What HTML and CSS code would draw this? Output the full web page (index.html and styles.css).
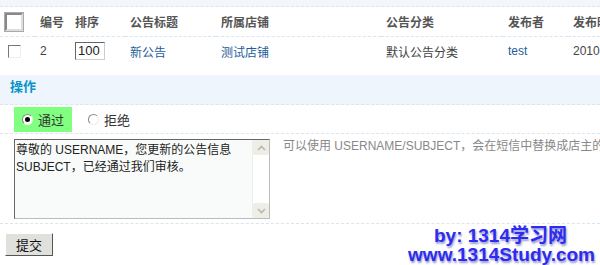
FILE: index.html
```html
<!DOCTYPE html>
<html lang="zh-CN">
<head>
    <meta charset="UTF-8">
    <title>公告审核</title>
    <link rel="stylesheet" href="styles.css">
</head>
<body>
    <div class="top-strip"></div>
    <table class="list">
        <colgroup>
            <col style="width: 35px">
            <col style="width: 35px">
            <col style="width: 55px">
            <col style="width: 91px">
            <col style="width: 165px">
            <col style="width: 122px">
            <col style="width: 65px">
            <col style="width: 32px">
        </colgroup>
        <tr class="head">
            <th><span class="chk big"></span></th>
            <th>编号</th>
            <th>排序</th>
            <th>公告标题</th>
            <th>所属店铺</th>
            <th>公告分类</th>
            <th>发布者</th>
            <th>发布时间</th>
        </tr>
        <tr class="row">
            <td><span class="chk"></span></td>
            <td>2</td>
            <td><span class="sort">100</span></td>
            <td><a href="#">新公告</a></td>
            <td><a href="#">测试店铺</a></td>
            <td>默认公告分类</td>
            <td><a href="#">test</a></td>
            <td>2010-10-10</td>
        </tr>
    </table>

    <div class="op-title">操作</div>
    <div class="op-radios">
        <label class="opt on"><span class="radio checked"></span>通过</label>
        <label class="opt"><span class="radio"></span>拒绝</label>
    </div>
    <div class="op-msg">
        <div class="msg-box">
            <textarea class="msg">尊敬的 USERNAME，您更新的公告信息
SUBJECT，已经通过我们审核。</textarea>
            <div class="bar">
                <span class="bar-btn">
                    <svg width="9" height="6" viewBox="0 0 9 6"><path d="M1 5 L4.5 1.5 L8 5" fill="none" stroke="#b8b8b0" stroke-width="1.6"/></svg>
                </span>
                <span class="bar-btn">
                    <svg width="9" height="6" viewBox="0 0 9 6"><path d="M1 1 L4.5 4.5 L8 1" fill="none" stroke="#b8b8b0" stroke-width="1.6"/></svg>
                </span>
            </div>
        </div>
        <div class="hint">可以使用 USERNAME/SUBJECT，会在短信中替换成店主的用户名和公告标题</div>
    </div>
    <div class="op-submit">
        <button class="submit">提交</button>
    </div>

    <div class="mark">
        <div class="mark-by">by: 1314学习网</div>
        <div class="mark-url">www.1314Study.com</div>
    </div>
</body>
</html>
```

FILE: styles.css
```css
body {
    margin: 0;
    font-family: "Liberation Sans", "Noto Sans CJK SC", sans-serif;
    font-size: 12px;
    color: #444;
    background: #fff;
    width: 600px;
    height: 265px;
    overflow: hidden;
    position: relative;
}

.top-strip {
    height: 6px;
    background: #f3f7fb;
    border-bottom: 1px dashed #d9e6f2;
}

.list {
    border-collapse: collapse;
    table-layout: fixed;
    width: 600px;
}

.list th,
.list td {
    padding: 0 5px;
    text-align: left;
    white-space: nowrap;
    overflow: hidden;
}

.list th:last-child,
.list td:last-child {
    padding-right: 0;
}

.list th {
    height: 29px;
    font-weight: bold;
    color: #555;
    border-bottom: 1px dashed #d9e6f2;
}

.list td {
    height: 28px;
}

.list a {
    color: #1d5c9a;
    text-decoration: none;
}

.chk {
    display: inline-block;
    width: 11px;
    height: 11px;
    border: 1px solid;
    border-color: #777 #eee #eee #777;
    background: #fff;
    vertical-align: middle;
    margin-left: 3px;
}

.chk.big {
    width: 14px;
    height: 14px;
    margin-left: 0;
    border: 2px solid;
    border-color: #888 #ddd #ddd #888;
    box-shadow: 0 0 0 1px #aaa;
}

.sort {
    display: inline-block;
    width: 26px;
    height: 16px;
    line-height: 16px;
    padding-left: 2px;
    border: 1px solid;
    border-color: #666 #ccc #ccc #666;
    color: #222;
    font-size: 13px;
    vertical-align: middle;
}

.op-title {
    margin-top: 10px;
    height: 29px;
    line-height: 23px;
    padding-left: 10px;
    background: #eef5fc;
    color: #0a93c9;
    font-weight: bold;
    font-size: 13px;
    border-bottom: 1px dashed #d9e6f2;
}

.op-radios {
    display: flex;
    align-items: center;
    padding: 1px 0 0 14px;
    height: 27px;
    border-bottom: 1px dashed #d9e6f2;
}

.opt {
    display: flex;
    align-items: center;
    height: 25px;
    padding: 0 8px;
    margin-right: 8px;
    font-size: 13px;
    color: #333;
}

.opt.on {
    background: #80ff80;
}

.radio {
    width: 9px;
    height: 9px;
    border-radius: 50%;
    border: 1px solid;
    border-color: #888 #eee #eee #888;
    background: #fff;
    margin-right: 5px;
    position: relative;
}

.radio.checked::after {
    content: "";
    position: absolute;
    left: 2px;
    top: 2px;
    width: 5px;
    height: 5px;
    border-radius: 50%;
    background: #000;
}

.op-msg {
    display: flex;
    align-items: flex-start;
    padding: 5px 0 4px 14px;
    border-bottom: 1px dashed #d9e6f2;
}

.msg-box {
    flex: none;
    display: flex;
    width: 256px;
    height: 80px;
    box-sizing: border-box;
    border: 1px solid;
    border-color: #666 #bbb #bbb #666;
    background: #f8fbf9;
}

.msg {
    flex: 1;
    min-width: 0;
    margin: 0;
    padding: 2px 1px;
    border: none;
    outline: none;
    background: transparent;
    font-family: "Liberation Sans", "Noto Sans CJK SC", sans-serif;
    font-size: 12px;
    line-height: 17px;
    color: #222;
    resize: none;
    overflow: hidden;
}

.bar {
    width: 16px;
    display: flex;
    flex-direction: column;
    justify-content: space-between;
    background: #fff;
    border-left: 1px solid #eee;
}

.bar-btn {
    height: 15px;
    display: flex;
    align-items: center;
    justify-content: center;
    background: #eeede6;
    border-radius: 2px;
}

.hint {
    min-width: 0;
    margin-left: 13px;
    color: #888;
    white-space: nowrap;
    overflow: hidden;
    line-height: 14px;
}

.op-submit {
    padding: 9px 5px;
}

.submit {
    width: 48px;
    height: 23px;
    padding: 0;
    background: #e0e0dd;
    border: 1px solid;
    border-color: #fff #555 #555 #fff;
    font-family: "Liberation Sans", "Noto Sans CJK SC", sans-serif;
    font-size: 13px;
    color: #111;
}

.mark {
    position: absolute;
    right: 5px;
    top: 226px;
    text-align: right;
    font-family: "Liberation Sans", "Noto Sans CJK SC", sans-serif;
    font-weight: bold;
    font-size: 19px;
    line-height: 19px;
    color: #2c2cf0;
    text-shadow: 1px 2px 2px #9a9ad0;
}

.mark-by {
    margin-right: 28px;
}
```
